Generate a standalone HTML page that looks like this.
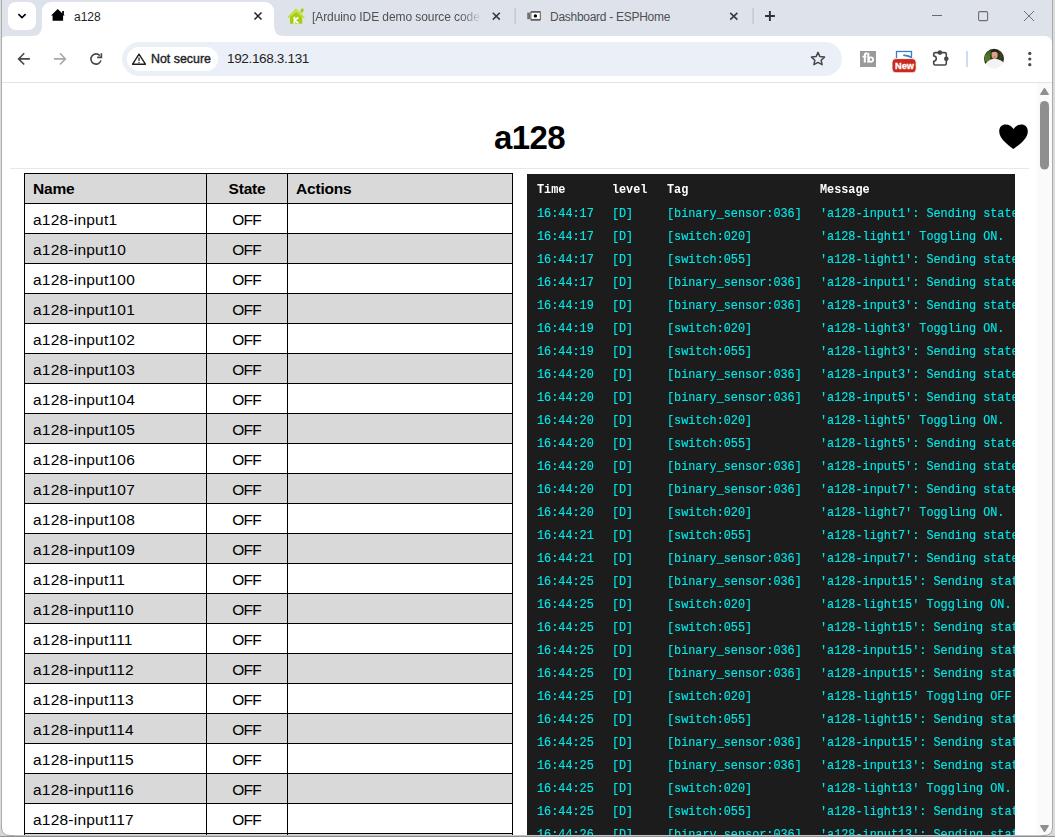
<!DOCTYPE html>
<html><head><meta charset="utf-8">
<style>
*{margin:0;padding:0;box-sizing:border-box}
html,body{width:1055px;height:837px;overflow:hidden;background:#f0f0f0;font-family:"Liberation Sans",sans-serif}
.a{position:absolute}
#win{position:absolute;left:0;top:0;width:1055px;height:837px;background:#dee3eb}
#tabbtn{left:8px;top:2px;width:28px;height:28px;background:#fff;border-radius:8px}
#tab{left:42px;top:2px;width:232px;height:34px;background:#fff;border-radius:9px 9px 0 0}
#toolbar{left:0;top:36px;width:1052px;height:47px;background:#fff;border-bottom:1px solid #e2e2e2}
#omni{left:122px;top:42px;width:720px;height:34px;background:#e9eef6;border-radius:17px}
#chip{left:127px;top:47px;width:91px;height:24px;background:#fff;border-radius:12px}
.tabt{font-size:13px;color:#1f1f1f;white-space:nowrap}
#page{left:2px;top:83px;width:1035px;height:752px;background:#fff;overflow:hidden}
#sb{left:1037px;top:83px;width:15px;height:752px;background:#fafafa}
table{border-collapse:collapse;table-layout:fixed;position:absolute;left:22px;top:90px;width:489px;font-size:15px;color:#000}
td,th{border:1px solid #000;height:30px;padding:2px 8px 0 8px;text-align:left;font-weight:normal}
th{font-weight:bold;font-size:15.5px;letter-spacing:-0.2px;padding-top:1px}
thead tr,tr.g{background:#d9d9d9}
td.c,th.c{text-align:center}
td{font-size:15.5px;letter-spacing:0.22px}
td.c{letter-spacing:-0.8px;text-indent:-0.8px}
#log{left:525px;top:91px;width:488px;height:700px;background:#1c1c1c;overflow:hidden;font-family:"Liberation Mono",monospace;font-size:12.4px;color:#00e8e8;-webkit-text-stroke:0.15px #00e8e8}
.sx{position:absolute;left:0;top:0;width:1100px;height:760px;transform:scaleX(0.9543);transform-origin:0 0}
.lr{position:absolute;left:0;height:23px;width:1000px;white-space:pre}
.lr span{position:absolute;top:0}
.t{left:10.5px}.l{left:89px}.g2{left:146.7px}.m{left:307px}
.hd{color:#fff;font-weight:bold;-webkit-text-stroke:0}
</style></head><body>
<div id="win">
  <div class="a" id="tabbtn"></div>
  <div class="a" id="tab"></div>
  <svg class="a" style="left:0;top:0" width="1055" height="83" viewBox="0 0 1055 83">
    <!-- active tab flares -->
    <path d="M32,36 Q42,36 42,26 L42,36 Z" fill="#fff"/>
    <path d="M284,36 Q274,36 274,26 L274,36 Z" fill="#fff"/>
    <!-- tab search chevron -->
    <path d="M18.4,14.1 L22,17.6 L25.6,14.1" fill="none" stroke="#000" stroke-width="1.6"/>
    <!-- house -->
    <path d="M51,15.4 L57.7,8.9 L62.2,13.2 L62.2,11 L63.9,11 L63.9,14.8 L64.8,15.4 L63.1,15.4 L63.1,20.7 L52.6,20.7 L52.6,15.4 Z" fill="#000"/>
    <!-- close active -->
    <path d="M254.5,12.5 L261.5,19.5 M261.5,12.5 L254.5,19.5" stroke="#1f1f1f" stroke-width="1.5"/>
    <!-- KIT icon -->
    <path d="M290,17 L296,11.5 L302.2,17 L302.2,23.8 L290,23.8 Z" fill="#a4cf0c"/>
    <path d="M288.4,17.2 L296,9.6 L303.8,17.2" fill="none" stroke="#bfe21e" stroke-width="1.6" stroke-linecap="round"/>
    <ellipse cx="302" cy="10.6" rx="1.5" ry="2.3" transform="rotate(25 302 10.6)" fill="#a4cf0c"/>
    <path d="M294.4,16.8 L294.4,23.8 M294.6,20.2 L298.4,17.4 M294.8,20.2 L298.4,23.4" stroke="#fff" stroke-width="1.7"/>
    <!-- close tab2 -->
    <path d="M492.8,12.8 L499.8,19.6 M499.8,12.8 L492.8,19.6" stroke="#3a3a3a" stroke-width="1.6"/>
    <rect x="514.5" y="8" width="1.2" height="16" fill="#c0c2c4"/>
    <!-- esphome icon -->
    <rect x="527.2" y="12.6" width="3" height="6.6" fill="#737373"/>
    <rect x="530.4" y="10.9" width="10.4" height="9.9" fill="#5e5e5e" rx="1"/>
    <rect x="531.4" y="12.8" width="8.4" height="6.1" fill="#fff"/>
    <circle cx="535.4" cy="15.9" r="1.7" fill="#000"/>
    <!-- close tab3 -->
    <path d="M730.2,12.8 L737.4,19.6 M737.4,12.8 L730.2,19.6" stroke="#3a3a3a" stroke-width="1.6"/>
    <rect x="752.5" y="8" width="1.2" height="16" fill="#c0c2c4"/>
    <path d="M769.9,11 L769.9,21 M765,16 L774.9,16" stroke="#333" stroke-width="1.9"/>
    <!-- window controls -->
    <rect x="932" y="15" width="10" height="1" fill="#6a6a6a"/>
    <rect x="978.6" y="11.6" width="9" height="9" rx="1.2" fill="none" stroke="#6e6e6e" stroke-width="1.1"/>
    <path d="M1024,11 L1034,21 M1034,11 L1024,21" stroke="#707070" stroke-width="1"/>
    <!-- toolbar -->
    <path d="M0,83 L0,44 Q0,36 8,36 L1044,36 Q1052,36 1052,44 L1052,83 Z" fill="#fff"/>
    <rect x="0" y="82" width="1052" height="1" fill="#e3e3e3"/>
    <!-- back -->
    <path d="M29.9,58.9 L18.8,58.9 M24.2,53.3 L18.6,58.9 L24.2,64.5" fill="none" stroke="#474747" stroke-width="1.6"/>
    <path d="M54,58.9 L65.2,58.9 M60,53.3 L65.4,58.9 L60,64.5" fill="none" stroke="#a8a8a8" stroke-width="1.6"/>
    <!-- reload -->
    <path d="M100.9,60.4 A5.1,5.1 0 1 1 99.8,55.6" fill="none" stroke="#474747" stroke-width="1.6"/>
    <path d="M97.2,57.4 L101.4,57.4 L101.4,53.2" fill="none" stroke="#474747" stroke-width="1.6"/>
    <!-- omnibox -->
    <rect x="122" y="42" width="720" height="34" rx="17" fill="#ebf0f8"/>
    <rect x="127" y="47" width="91" height="24" rx="12" fill="#fff"/>
    <!-- warning triangle -->
    <path d="M139,54.2 L145.4,64.2 L132.6,64.2 Z" fill="none" stroke="#1f1f1f" stroke-width="1.4" stroke-linejoin="round"/>
    <rect x="138.4" y="57.4" width="1.2" height="3.6" fill="#1f1f1f"/>
    <rect x="138.4" y="62" width="1.2" height="1.2" fill="#1f1f1f"/>
    <!-- star -->
    <path d="M818,52.4 L819.9,56.6 L824.5,57.1 L821.1,60.2 L822.1,64.7 L818,62.4 L813.9,64.7 L814.9,60.2 L811.5,57.1 L816.1,56.6 Z" fill="none" stroke="#474747" stroke-width="1.5" stroke-linejoin="round"/>
    <!-- tb ext -->
    <rect x="860" y="51" width="16" height="16" fill="#9a9a9a"/>
    <path d="M864.8,62.6 L864.8,55.2 Q864.8,53.2 867.2,53.2" stroke="#fff" stroke-width="2" fill="none"/>
    <path d="M862.4,56.6 L866.4,56.6" stroke="#fff" stroke-width="1.6"/>
    <path d="M868.3,52.8 L868.3,62.6" stroke="#fff" stroke-width="2"/>
    <circle cx="870.9" cy="59.6" r="2.2" fill="none" stroke="#fff" stroke-width="1.8"/>
    <!-- New ext -->
    <rect x="896.5" y="51.5" width="15" height="10" fill="none" stroke="#3a7fc0" stroke-width="1.3"/>
    <path d="M903.2,54.6 Q907.5,54 911.4,56.6 L911.4,58.2 Q907,56.4 903.2,56 Z" fill="#3a86c8"/>
    <rect x="892" y="58.6" width="24.2" height="14.2" rx="3.8" fill="#c92a1e" stroke="#fff" stroke-width="0.9"/>
    <!-- puzzle -->
    <path d="M935.2,52.6 L944.8,52.6 Q946.3,52.6 946.3,54.1 L946.3,63.5 Q946.3,65 944.8,65 L935.2,65 Q933.7,65 933.7,63.5 L933.7,61.2 A2.6,2.6 0 0 0 933.7,56 L933.7,54.1 Q933.7,52.6 935.2,52.6 Z" fill="none" stroke="#474747" stroke-width="1.6" stroke-linejoin="round"/>
    <circle cx="939.9" cy="52.6" r="2.3" fill="#474747"/>
    <circle cx="946.3" cy="58.8" r="2.3" fill="#474747"/>
    <rect x="966" y="51" width="2" height="16" fill="#c9ddf9"/>
    <!-- avatar -->
    <defs><clipPath id="av"><circle cx="994" cy="58.8" r="10"/></clipPath></defs>
    <g clip-path="url(#av)">
      <rect x="984" y="48" width="20" height="21" fill="#fbf8fa"/>
      <path d="M984,66 L984,48 L1004,48 L1004,63 Q1001,60 998,59.5 L991,59.5 Q987,61 984,66 Z" fill="#27361a"/>
      <ellipse cx="987.5" cy="58" rx="3" ry="4" fill="#5a8a2a" opacity="0.8"/>
      <ellipse cx="989" cy="53" rx="2.5" ry="2.5" fill="#4b6e28" opacity="0.8"/>
      <ellipse cx="1001" cy="56" rx="1.5" ry="3" fill="#5a3b22" opacity="0.7"/>
      <ellipse cx="994.6" cy="55" rx="3.1" ry="3.9" fill="#d8a58c"/>
      <path d="M991.3,53 Q991.5,49.6 994.6,49.6 Q997.8,49.6 997.9,53 Q996,51.6 994.6,51.8 Q992.8,51.6 991.3,53 Z" fill="#2a1c14"/>
      <ellipse cx="994.4" cy="56.8" rx="1.3" ry="0.6" fill="#c06a60"/>
      <path d="M985,69 L987,62 Q990,59.6 993,59 L996,59 Q1000,59.6 1003,62 L1004,69 Z" fill="#f6f1f4"/>
    </g>
    <circle cx="1029.8" cy="53.4" r="1.6" fill="#474747"/>
    <circle cx="1029.8" cy="59" r="1.6" fill="#474747"/>
    <circle cx="1029.8" cy="64.7" r="1.6" fill="#474747"/>
    <!-- window borders -->
    <rect x="1" y="0" width="1" height="836" fill="#a9a9a9"/>
    <rect x="1052" y="0" width="1" height="836" fill="#a9a9a9"/>
  </svg>
  <div class="a tabt" style="left:74px;top:10px;font-size:12px">a128</div>
  <div class="a tabt" style="left:312px;top:10px;font-size:12px;letter-spacing:-0.08px;color:#505050;width:168px;overflow:hidden;-webkit-mask-image:linear-gradient(90deg,#000 148px,rgba(0,0,0,0.15) 167px,transparent 170px)">[Arduino IDE demo source code</div>
  <div class="a tabt" style="left:550px;top:10px;font-size:12px;letter-spacing:-0.28px;color:#505050">Dashboard - ESPHome</div>
  
  <div class="a" style="left:892.5px;top:61px;width:24px;font-size:9.2px;font-weight:bold;color:#fff;letter-spacing:0;text-align:center;-webkit-text-stroke:0.3px #fff">New</div>
  <div class="a" style="left:151px;top:52px;font-size:12.4px;color:#1f1f1f;-webkit-text-stroke:0.4px #1f1f1f">Not secure</div>
  <div class="a" style="left:227px;top:51px;font-size:13.6px;color:#1f1f1f;letter-spacing:-0.38px">192.168.3.131</div>
<div class="a" id="page">
    <div class="a" style="left:492px;top:36px;font-size:33px;font-weight:bold;color:#000;letter-spacing:-0.6px">a128</div>
    <div class="a" style="left:8px;top:85px;width:1019px;height:1px;background:#e8e8e8"></div>
    <table>
      <colgroup><col style="width:182px"><col style="width:81px"><col style="width:225px"></colgroup><thead><tr><th>Name</th><th class="c">State</th><th>Actions</th></tr></thead>
      <tbody>
<tr><td>a128-input1</td><td class="c">OFF</td><td></td></tr>
<tr class="g"><td>a128-input10</td><td class="c">OFF</td><td></td></tr>
<tr><td>a128-input100</td><td class="c">OFF</td><td></td></tr>
<tr class="g"><td>a128-input101</td><td class="c">OFF</td><td></td></tr>
<tr><td>a128-input102</td><td class="c">OFF</td><td></td></tr>
<tr class="g"><td>a128-input103</td><td class="c">OFF</td><td></td></tr>
<tr><td>a128-input104</td><td class="c">OFF</td><td></td></tr>
<tr class="g"><td>a128-input105</td><td class="c">OFF</td><td></td></tr>
<tr><td>a128-input106</td><td class="c">OFF</td><td></td></tr>
<tr class="g"><td>a128-input107</td><td class="c">OFF</td><td></td></tr>
<tr><td>a128-input108</td><td class="c">OFF</td><td></td></tr>
<tr class="g"><td>a128-input109</td><td class="c">OFF</td><td></td></tr>
<tr><td>a128-input11</td><td class="c">OFF</td><td></td></tr>
<tr class="g"><td>a128-input110</td><td class="c">OFF</td><td></td></tr>
<tr><td>a128-input111</td><td class="c">OFF</td><td></td></tr>
<tr class="g"><td>a128-input112</td><td class="c">OFF</td><td></td></tr>
<tr><td>a128-input113</td><td class="c">OFF</td><td></td></tr>
<tr class="g"><td>a128-input114</td><td class="c">OFF</td><td></td></tr>
<tr><td>a128-input115</td><td class="c">OFF</td><td></td></tr>
<tr class="g"><td>a128-input116</td><td class="c">OFF</td><td></td></tr>
<tr><td>a128-input117</td><td class="c">OFF</td><td></td></tr>
<tr class="g"><td>a128-input118</td><td class="c">OFF</td><td></td></tr>
      </tbody>
    </table>
    <div class="a" id="log"><div class="sx">
      <div class="lr hd" style="top:8.5px"><span class="t">Time</span><span class="l">level</span><span class="g2">Tag</span><span class="m">Message</span></div>
      <div class="a" style="left:0;top:33px">
<div class="lr" style="top:0px"><span class="t">16:44:17</span><span class="l">[D]</span><span class="g2">[binary_sensor:036]</span><span class="m">&#39;a128-input1&#39;: Sending state</span></div>
<div class="lr" style="top:23px"><span class="t">16:44:17</span><span class="l">[D]</span><span class="g2">[switch:020]</span><span class="m">&#39;a128-light1&#39; Toggling ON.</span></div>
<div class="lr" style="top:46px"><span class="t">16:44:17</span><span class="l">[D]</span><span class="g2">[switch:055]</span><span class="m">&#39;a128-light1&#39;: Sending state</span></div>
<div class="lr" style="top:69px"><span class="t">16:44:17</span><span class="l">[D]</span><span class="g2">[binary_sensor:036]</span><span class="m">&#39;a128-input1&#39;: Sending state</span></div>
<div class="lr" style="top:92px"><span class="t">16:44:19</span><span class="l">[D]</span><span class="g2">[binary_sensor:036]</span><span class="m">&#39;a128-input3&#39;: Sending state</span></div>
<div class="lr" style="top:115px"><span class="t">16:44:19</span><span class="l">[D]</span><span class="g2">[switch:020]</span><span class="m">&#39;a128-light3&#39; Toggling ON.</span></div>
<div class="lr" style="top:138px"><span class="t">16:44:19</span><span class="l">[D]</span><span class="g2">[switch:055]</span><span class="m">&#39;a128-light3&#39;: Sending state</span></div>
<div class="lr" style="top:161px"><span class="t">16:44:20</span><span class="l">[D]</span><span class="g2">[binary_sensor:036]</span><span class="m">&#39;a128-input3&#39;: Sending state</span></div>
<div class="lr" style="top:184px"><span class="t">16:44:20</span><span class="l">[D]</span><span class="g2">[binary_sensor:036]</span><span class="m">&#39;a128-input5&#39;: Sending state</span></div>
<div class="lr" style="top:207px"><span class="t">16:44:20</span><span class="l">[D]</span><span class="g2">[switch:020]</span><span class="m">&#39;a128-light5&#39; Toggling ON.</span></div>
<div class="lr" style="top:230px"><span class="t">16:44:20</span><span class="l">[D]</span><span class="g2">[switch:055]</span><span class="m">&#39;a128-light5&#39;: Sending state</span></div>
<div class="lr" style="top:253px"><span class="t">16:44:20</span><span class="l">[D]</span><span class="g2">[binary_sensor:036]</span><span class="m">&#39;a128-input5&#39;: Sending state</span></div>
<div class="lr" style="top:276px"><span class="t">16:44:20</span><span class="l">[D]</span><span class="g2">[binary_sensor:036]</span><span class="m">&#39;a128-input7&#39;: Sending state</span></div>
<div class="lr" style="top:299px"><span class="t">16:44:20</span><span class="l">[D]</span><span class="g2">[switch:020]</span><span class="m">&#39;a128-light7&#39; Toggling ON.</span></div>
<div class="lr" style="top:322px"><span class="t">16:44:21</span><span class="l">[D]</span><span class="g2">[switch:055]</span><span class="m">&#39;a128-light7&#39;: Sending state</span></div>
<div class="lr" style="top:345px"><span class="t">16:44:21</span><span class="l">[D]</span><span class="g2">[binary_sensor:036]</span><span class="m">&#39;a128-input7&#39;: Sending state</span></div>
<div class="lr" style="top:368px"><span class="t">16:44:25</span><span class="l">[D]</span><span class="g2">[binary_sensor:036]</span><span class="m">&#39;a128-input15&#39;: Sending state</span></div>
<div class="lr" style="top:391px"><span class="t">16:44:25</span><span class="l">[D]</span><span class="g2">[switch:020]</span><span class="m">&#39;a128-light15&#39; Toggling ON.</span></div>
<div class="lr" style="top:414px"><span class="t">16:44:25</span><span class="l">[D]</span><span class="g2">[switch:055]</span><span class="m">&#39;a128-light15&#39;: Sending state</span></div>
<div class="lr" style="top:437px"><span class="t">16:44:25</span><span class="l">[D]</span><span class="g2">[binary_sensor:036]</span><span class="m">&#39;a128-input15&#39;: Sending state</span></div>
<div class="lr" style="top:460px"><span class="t">16:44:25</span><span class="l">[D]</span><span class="g2">[binary_sensor:036]</span><span class="m">&#39;a128-input15&#39;: Sending state</span></div>
<div class="lr" style="top:483px"><span class="t">16:44:25</span><span class="l">[D]</span><span class="g2">[switch:020]</span><span class="m">&#39;a128-light15&#39; Toggling OFF</span></div>
<div class="lr" style="top:506px"><span class="t">16:44:25</span><span class="l">[D]</span><span class="g2">[switch:055]</span><span class="m">&#39;a128-light15&#39;: Sending state</span></div>
<div class="lr" style="top:529px"><span class="t">16:44:25</span><span class="l">[D]</span><span class="g2">[binary_sensor:036]</span><span class="m">&#39;a128-input15&#39;: Sending state</span></div>
<div class="lr" style="top:552px"><span class="t">16:44:25</span><span class="l">[D]</span><span class="g2">[binary_sensor:036]</span><span class="m">&#39;a128-input13&#39;: Sending state</span></div>
<div class="lr" style="top:575px"><span class="t">16:44:25</span><span class="l">[D]</span><span class="g2">[switch:020]</span><span class="m">&#39;a128-light13&#39; Toggling ON.</span></div>
<div class="lr" style="top:598px"><span class="t">16:44:25</span><span class="l">[D]</span><span class="g2">[switch:055]</span><span class="m">&#39;a128-light13&#39;: Sending state</span></div>
<div class="lr" style="top:621px"><span class="t">16:44:26</span><span class="l">[D]</span><span class="g2">[binary_sensor:036]</span><span class="m">&#39;a128-input13&#39;: Sending state</span></div>
      </div>
    </div></div>
  </div>
  <div class="a" id="sb"></div>
  <svg class="a" style="left:1037px;top:83px" width="15" height="753" viewBox="0 0 15 753">
    <path d="M3.8,11.4 L7.5,5.6 L11.2,11.4 Z" fill="#8f8f8f" stroke="#8f8f8f" stroke-width="1.4" stroke-linejoin="round"/>
    <rect x="3" y="18" width="9" height="68.5" rx="4.5" fill="#8f8f8f"/>
    <path d="M3.8,742.6 L11.2,742.6 L7.5,748.4 Z" fill="#8f8f8f" stroke="#8f8f8f" stroke-width="1.4" stroke-linejoin="round"/>
  </svg>
  <svg class="a" style="left:997px;top:122px" width="34" height="30" viewBox="0 0 34 30">
    <path d="M16.5,27 C13.4,24.4 2.2,17.4 2.2,9.4 C2.2,5 4.9,2.5 8.7,2.5 C12.1,2.5 14.8,4.5 16.5,7 C18.2,4.5 20.9,2.5 24.3,2.5 C28.1,2.5 30.8,5 30.8,9.4 C30.8,17.4 19.6,24.4 16.5,27 Z" fill="#000"/>
  </svg>
  <div class="a" style="left:0;top:0;width:1px;height:836px;background:#dcdcdc"></div><div class="a" style="left:1px;top:0;width:1px;height:836px;background:#acacac"></div>
  <div class="a" style="left:1052px;top:0;width:1px;height:836px;background:#acacac"></div>
  <div class="a" style="left:0;top:835px;width:1055px;height:1px;background:#c4c4c4"></div>
  <svg class="a" style="left:0;top:825px" width="14" height="12" viewBox="0 0 14 12"><path d="M0,0 L1.5,0 L1.5,2 Q1.5,10.5 10,10.5 L14,10.5 L14,12 L0,12 Z" fill="#d6d6d6"/><path d="M1.5,0 L1.5,2 Q1.5,10.5 10,10.5 L14,10.5" fill="none" stroke="#acacac" stroke-width="1"/></svg>
  <svg class="a" style="left:1041px;top:825px" width="14" height="12" viewBox="0 0 14 12"><path d="M14,0 L11.5,0 L11.5,2 Q11.5,10.5 3,10.5 L0,10.5 L0,12 L14,12 Z" fill="#d6d6d6"/><path d="M11.5,0 L11.5,2 Q11.5,10.5 3,10.5 L0,10.5" fill="none" stroke="#acacac" stroke-width="1"/></svg>
  <div class="a" style="left:0;top:836px;width:1055px;height:1px;background:#8a929c"></div>
  <div class="a" style="left:1053px;top:0;width:2px;height:835px;background:#dadada"></div>
</div>
</body></html>
